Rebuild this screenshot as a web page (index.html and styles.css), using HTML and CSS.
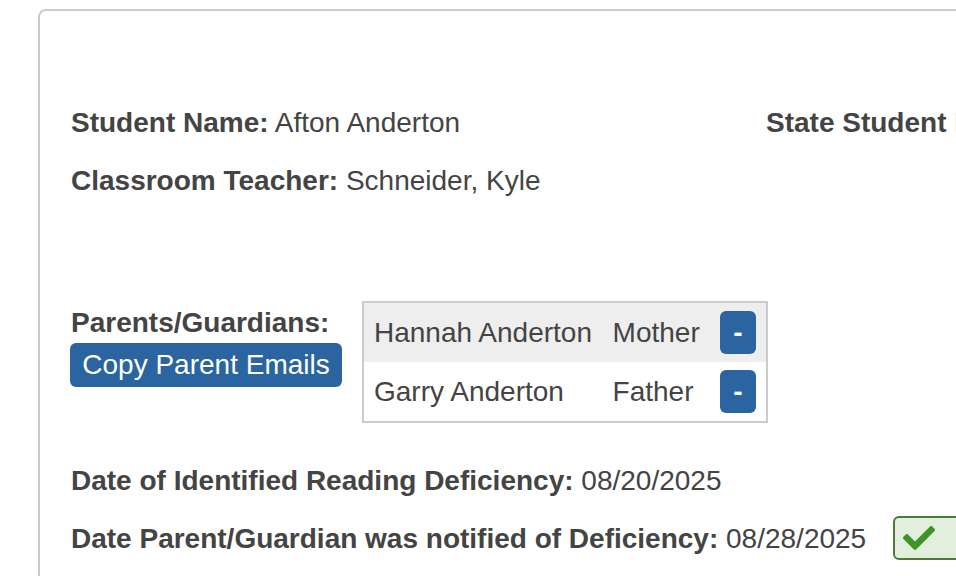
FILE: index.html
```html
<!DOCTYPE html>
<html lang="en">
<head>
    <meta charset="UTF-8">
    <meta name="viewport" content="width=device-width, initial-scale=1.0">
    <title>Student Reading Plan</title>
    <link rel="stylesheet" href="styles.css">
</head>
<body>
    <div class="card">
        <div class="info-row">
            <div class="info-col">
                <p class="field"><b>Student Name:</b> Afton Anderton</p>
                <p class="field"><b>Classroom Teacher:</b> Schneider, Kyle</p>
            </div>
            <div class="info-col">
                <p class="field"><b>State Student ID:</b> 1048822</p>
            </div>
        </div>

        <div class="parents">
            <div class="parents-side">
                <div class="parents-label">Parents/Guardians:</div>
                <button class="btn-blue">Copy Parent Emails</button>
            </div>
            <table class="parent-table">
                <tr class="shade">
                    <td>Hannah Anderton</td>
                    <td>Mother</td>
                    <td><button class="btn-minus">-</button></td>
                </tr>
                <tr>
                    <td>Garry Anderton</td>
                    <td>Father</td>
                    <td><button class="btn-minus">-</button></td>
                </tr>
            </table>
        </div>

        <p class="field date-first"><b>Date of Identified Reading Deficiency:</b> 08/20/2025</p>
        <div class="field field-action">
            <span><b>Date Parent/Guardian was notified of Deficiency:</b> 08/28/2025</span>
            <button class="btn-check">
                <svg width="32" height="24" viewBox="0 65 512 381"><path fill="#3d9427" d="M173.898 439.404l-166.4-166.4c-9.997-9.997-9.997-26.206 0-36.204l36.203-36.204c9.997-9.998 26.207-9.998 36.204 0L192 312.69 432.095 72.596c9.997-9.997 26.207-9.997 36.204 0l36.203 36.204c9.997 9.997 9.997 26.206 0 36.204l-294.4 294.401c-9.998 9.997-26.207 9.997-36.204-.001z"/></svg>
            </button>
        </div>
    </div>
</body>
</html>
```

FILE: styles.css
```css
html, body {
    margin: 0;
    padding: 0;
    overflow: hidden;
    background-color: #fff;
}
body {
    font-family: "Liberation Sans", Arial, sans-serif;
    font-size: 28px;
    color: #444;
}
.card {
    width: 1100px;
    height: 700px;
    margin: 9px 0 0 38px;
    padding: 92px 0 0 31px;
    border: 2px solid #ccc;
    border-radius: 8px;
}
.info-row {
    display: flex;
}
.info-col:first-child {
    width: 695px;
}
.field {
    margin: 0 0 18px 0;
    line-height: 40px;
    white-space: nowrap;
}
.field-action {
    display: flex;
    align-items: center;
    height: 40px;
    gap: 27px;
}
.parents {
    display: flex;
    align-items: flex-start;
    gap: 20px;
    margin-top: 82px;
}
.parents-side {
    width: 272px;
    margin-left: -1px;
}
.parents-label {
    font-weight: bold;
    line-height: 34px;
    margin: 5px 0 0 1px;
}
.btn-blue {
    display: block;
    width: 272px;
    height: 44px;
    margin-top: 3px;
    padding: 0 0 1px 0;
    background-color: #2a64a1;
    color: #fff;
    border: none;
    border-radius: 6px;
    font-family: inherit;
    font-size: 28px;
}
.parent-table {
    border: 2px solid #ccc;
    border-collapse: collapse;
    width: 406px;
}
.parent-table td {
    height: 59px;
    padding: 0 10px;
    white-space: nowrap;
}
.parent-table td:last-child {
    width: 36px;
}
.shade {
    background-color: #eee;
}
.btn-minus {
    display: block;
    width: 36px;
    height: 43px;
    padding: 0;
    background-color: #2a64a1;
    color: #fff;
    border: none;
    border-radius: 6px;
    font-family: inherit;
    font-size: 28px;
    font-weight: bold;
}
.date-first {
    margin-top: 38px;
}
.btn-check {
    display: flex;
    align-items: center;
    flex-shrink: 0;
    width: 80px;
    height: 44px;
    margin-top: -2px;
    padding: 0 0 0 8px;
    background-color: #e2efdc;
    border: 2px solid #4c7a3d;
    border-radius: 6px;
}
```
